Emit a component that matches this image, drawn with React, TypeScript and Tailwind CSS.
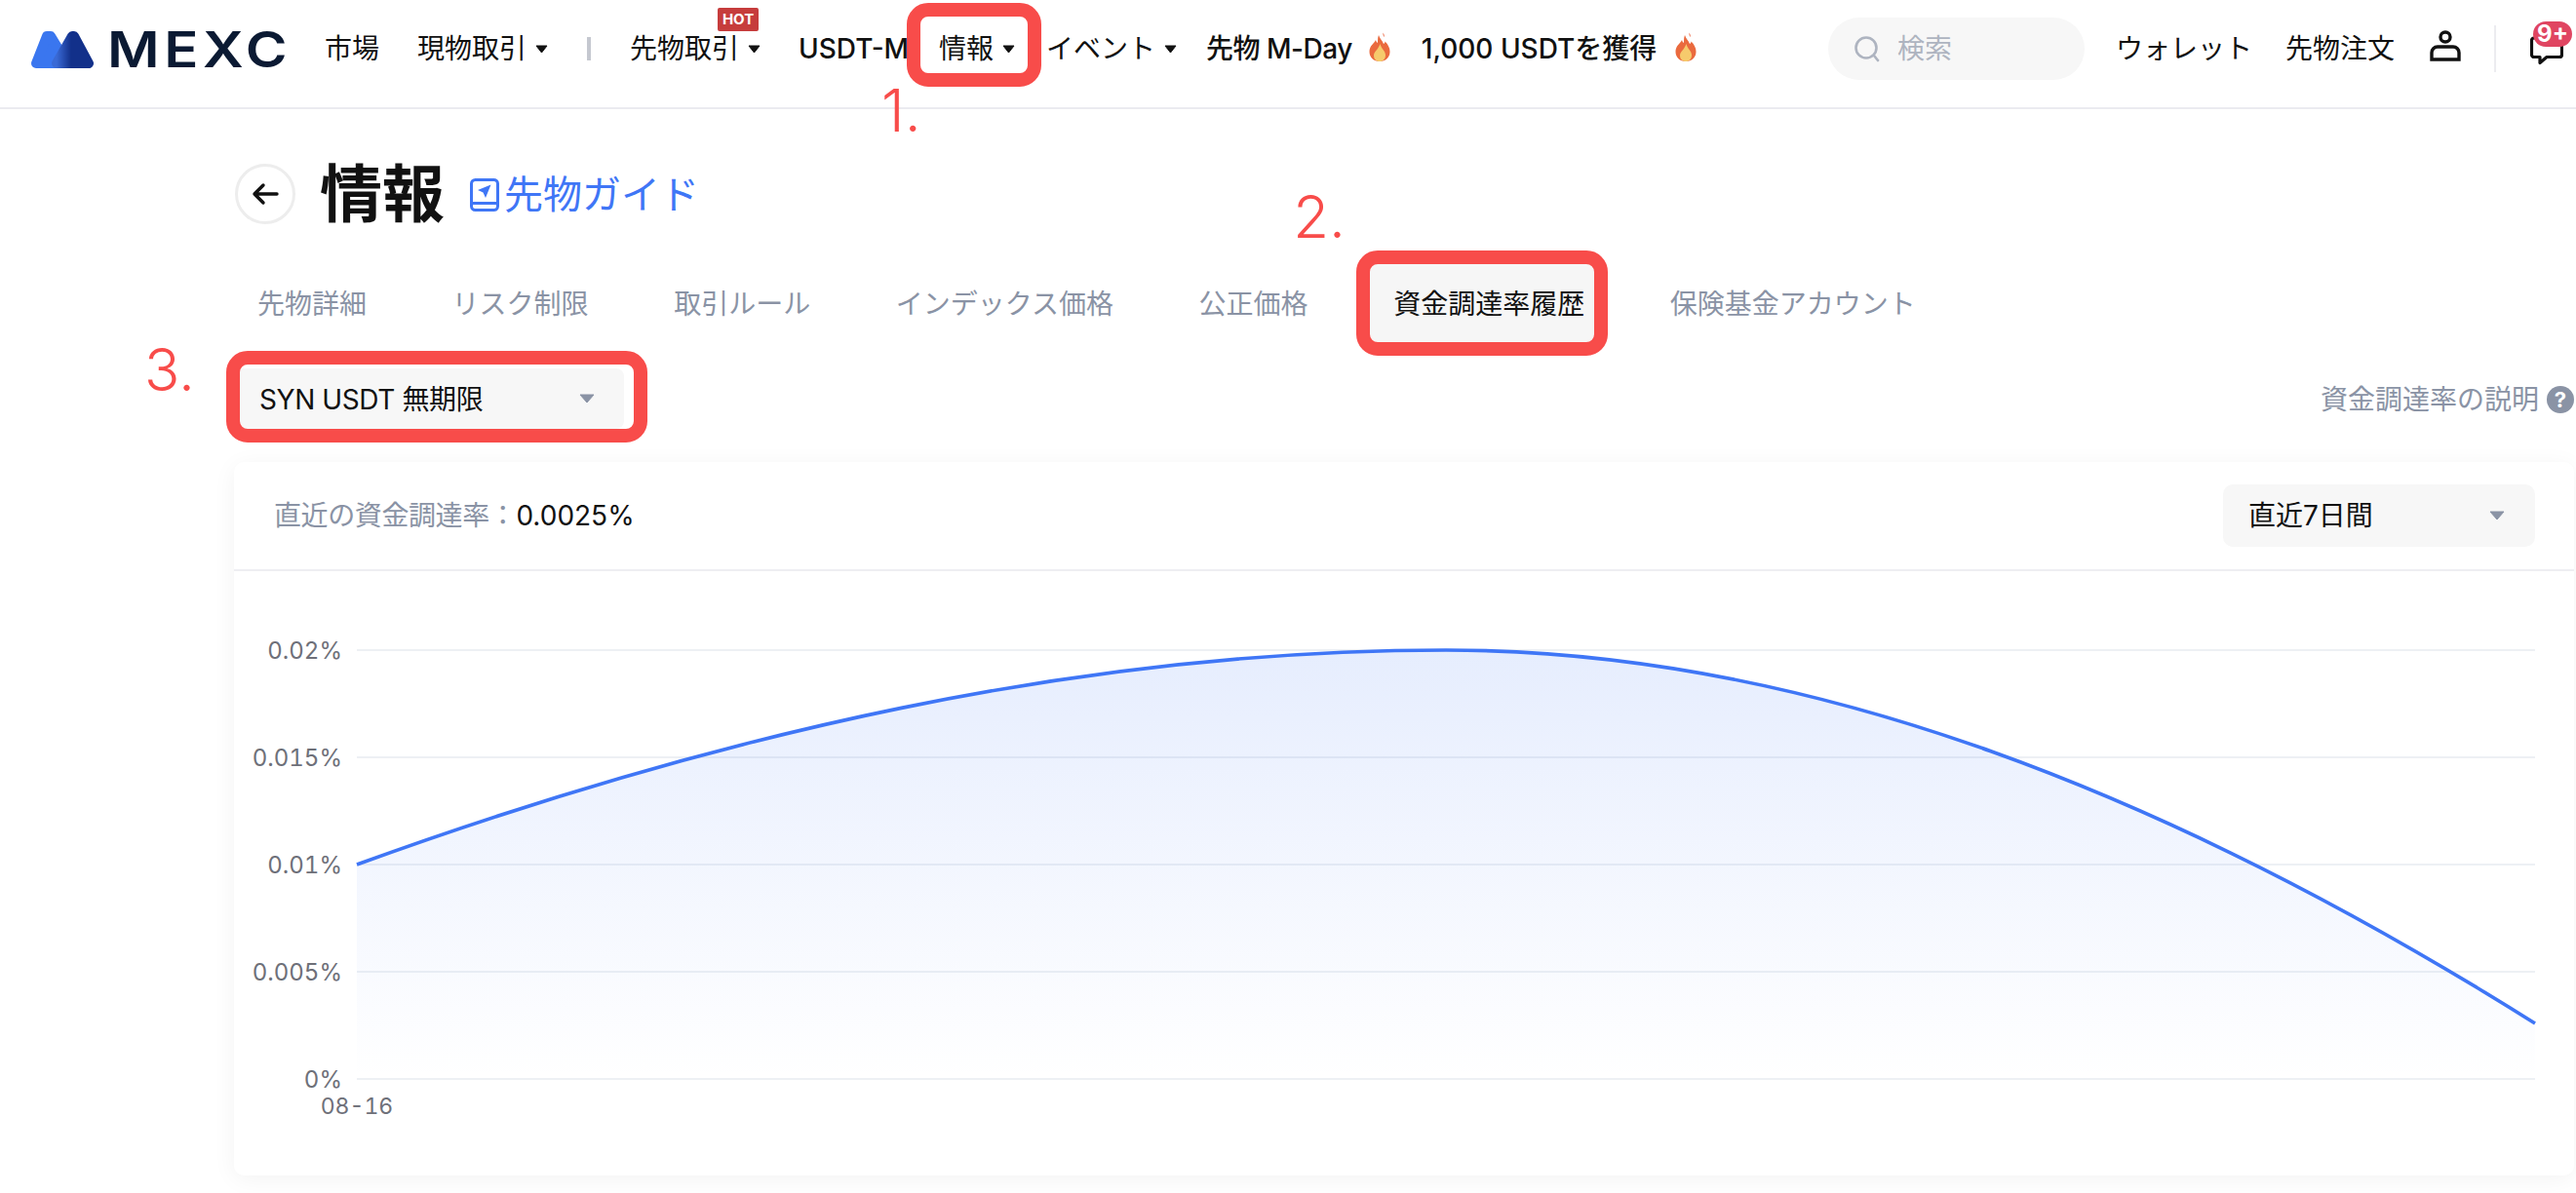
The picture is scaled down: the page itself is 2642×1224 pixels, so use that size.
import React from "react";

const FONT = "[font-family:Inter,'Noto_Sans_CJK_JP',sans-serif]";

function Caret({ gray }: { gray?: boolean }) {
  if (gray) {
    return (
      <svg width="16" height="10" viewBox="0 0 16 10" className="shrink-0">
        <path d="M1 1 H15 L8 9 Z" fill="#8a93a5" stroke="#8a93a5" strokeLinejoin="round" strokeWidth="1" />
      </svg>
    );
  }
  return (
    <svg width="13" height="9" viewBox="0 0 13 9" className="ml-[9px] shrink-0">
      <path d="M1 1 H12 L6.5 8 Z" fill="#111" stroke="#111" strokeLinejoin="round" strokeWidth="1" />
    </svg>
  );
}

function Flame() {
  return (
    <svg width="22" height="30" viewBox="0 0 22 30" className="shrink-0 block">
      <path d="M14.5 0.5 C15.5 2 16 3.5 15.5 5 C14.8 4 14.3 2.5 14.5 0.5 Z" fill="#e9603a" />
      <path d="M10 3 C11 7 14 8.5 15 12 C16 11.5 16.5 10.5 16.5 9.5 C19.5 12.5 21.5 16 21.5 20 C21.5 26 17 30 11 30 C5 30 0.5 26 0.5 20 C0.5 14 5 12 7 8 C7.5 9.5 8 10.5 9 11 C9 8 9 5.5 10 3 Z" fill="#ea6a3e" />
      <path d="M11.5 12 C12.5 17 17 19 17 23.5 C17 27.5 14.5 30 11 30 C7.5 30 5 27.5 5 24 C5 20 9.5 18 11.5 12 Z" fill="#f6ca6c" />
    </svg>
  );
}

function Logo() {
  return (
    <div className="flex items-center shrink-0">
      <svg width="64" height="39" viewBox="0 0 64 39" className="shrink-0">
        <defs>
          <linearGradient id="mx" x1="0" y1="0" x2="1" y2="0">
            <stop offset="0" stopColor="#3a6ad6" />
            <stop offset="0.45" stopColor="#12308a" />
            <stop offset="1" stopColor="#12308a" />
          </linearGradient>
        </defs>
        <path d="M5 34 L16 6 H20 L37 34 Z" fill="#3a76ef" stroke="#3a76ef" strokeWidth="10" strokeLinejoin="round" />
        <path d="M26 34 L42 6 H44 L59 34 Z" fill="url(#mx)" stroke="url(#mx)" strokeWidth="10" strokeLinejoin="round" />
      </svg>
      <span className="ml-[14px] w-[183px] inline-block origin-left scale-x-[1.14] text-[51px] leading-none font-semibold tracking-[4px] text-[#0b1a33] [font-family:Inter,sans-serif]">MEXC</span>
    </div>
  );
}

function Ring({ className }: { className: string }) {
  return <div className={`absolute border-[14px] border-[#f84c4a] rounded-[22px] ${className}`} />;
}

function Chart() {
  const grid = [667, 777, 887, 997, 1107];
  const labels = ["0.02%", "0.015%", "0.01%", "0.005%", "0%"];
  const line = "M366 887 C738 752 1111 667 1483 667 C1856 667 2228 816 2600 1050";
  return (
    <svg viewBox="240 586 2400 620" className="w-[2400px] h-[620px] block tabular-nums">
      <defs>
        <linearGradient id="area" x1="0" y1="667" x2="0" y2="1107" gradientUnits="userSpaceOnUse">
          <stop offset="0" stopColor="#3f76f6" stopOpacity="0.13" />
          <stop offset="1" stopColor="#3f76f6" stopOpacity="0" />
        </linearGradient>
      </defs>
      {grid.map((y, i) => (
        <g key={y}>
          <line x1="366" x2="2600" y1={y} y2={y} stroke="#edf0f4" strokeWidth="2" />
          <text x="351" y={y + 9} textAnchor="end" fontSize="24" fill="#6e7079" fontFamily="Inter, sans-serif">
            {labels[i]}
          </text>
        </g>
      ))}
      <path d={`${line} L2600 1107 L366 1107 Z`} fill="url(#area)" />
      <path d={line} fill="none" stroke="#3f76f6" strokeWidth="3.6" />
      <text x="366" y="1143" textAnchor="middle" fontSize="23" fill="#6e7079" fontFamily="Inter, sans-serif">08-16</text>
    </svg>
  );
}

export default function App() {
  const tabs = ["先物詳細", "リスク制限", "取引ルール", "インデックス価格", "公正価格", "資金調達率履歴", "保険基金アカウント"];
  return (
    <div className={`w-[2642px] h-[1224px] overflow-hidden bg-white text-[#111] relative ${FONT}`}>
      <header className="h-[112px] border-b-2 border-[#ebebf0] flex items-center pt-[10px] pb-[20px] pl-[32px] text-[28px] leading-[40px] whitespace-nowrap">
        <Logo />
        <span className="ml-[40px]">市場</span>
        <div className="ml-[39px] flex items-center"><span>現物取引</span><Caret /></div>
        <div className="ml-[40px] w-[4px] h-[24px] bg-[#c5c8d0]" />
        <div className="ml-[40px] flex items-center relative">
          <span>先物取引</span><Caret />
          <span className="absolute left-[90px] top-[-22px] w-[42px] h-[24px] bg-[#c63c3c] rounded-[2px] text-white text-[15px] leading-[24px] font-bold text-center">HOT</span>
        </div>
        <span className="ml-[39px] font-medium w-[109px]">USDT-M</span>
        <div className="ml-[35px] flex items-center relative">
          <Ring className="left-[-33px] right-[-27px] top-[-27px] bottom-[-19px]" />
          <span>情報</span><Caret />
          <span className="absolute left-[-59px] top-[48px] text-[60px] leading-[70px] font-light text-[#f84c4a]">1.</span>
        </div>
        <div className="ml-[32px] flex items-center"><span>イベント</span><Caret /></div>
        <span className="ml-[30px] font-medium tracking-[-0.5px]">先物 M-Day</span>
        <span className="ml-[17px] -mt-[4px]"><Flame /></span>
        <span className="ml-[32px] font-medium">1,000 USDTを獲得</span>
        <span className="ml-[19px] -mt-[4px]"><Flame /></span>
        <div className="ml-auto flex items-center">
          <div className="w-[263px] h-[64px] rounded-[32px] bg-[#f7f7f7] flex items-center pl-[26px] text-[#aeb4c0]">
            <svg width="28" height="28" viewBox="0 0 28 28" fill="none" stroke="#aeb4c0" strokeWidth="2.6" strokeLinecap="round">
              <circle cx="13" cy="13" r="10.5" />
              <path d="M21 21 L25 26" />
            </svg>
            <span className="ml-[17px]">検索</span>
          </div>
          <span className="ml-[32px]">ウォレット</span>
          <span className="ml-[34px]">先物注文</span>
          <svg width="32" height="32" viewBox="0 0 32 32" fill="none" stroke="#111" strokeWidth="3.4" className="ml-[36px] -mt-[7px]">
            <circle cx="16" cy="7" r="5" />
            <path d="M8 17 H24 A6 6 0 0 1 30 23 V30 H2 V23 A6 6 0 0 1 8 17 Z" />
          </svg>
          <div className="ml-[34px] w-[2px] h-[48px] bg-[#ececf0]" />
          <div className="ml-[35px] mr-[13px] relative w-[34px] h-[30px]">
            <svg width="34" height="30" viewBox="0 0 34 30" fill="none" stroke="#111" strokeWidth="3.2" strokeLinejoin="round" className="mt-[2px]">
              <path d="M4 2 H30 A2.5 2.5 0 0 1 32.5 4.5 V19 A2.5 2.5 0 0 1 30 21.5 H17 L10 27.5 V21.5 H4 A2.5 2.5 0 0 1 1.5 19 V4.5 A2.5 2.5 0 0 1 4 2 Z" />
            </svg>
            <span className="absolute left-[3px] top-[-13px] w-[40px] h-[26px] rounded-full bg-[#e04561] text-white text-[24px] leading-[26px] font-bold text-center">9+</span>
          </div>
        </div>
      </header>

      <main className="pl-[240px] pr-[2px]">
        <div className="flex items-center pt-[56px] h-[118px]">
          <button className="ml-[1px] w-[62px] h-[62px] rounded-full border-[3px] border-[#ededed] flex items-center justify-center">
            <svg width="28" height="24" viewBox="0 0 28 24" fill="none" stroke="#111" strokeWidth="3.4" strokeLinecap="round" strokeLinejoin="round">
              <path d="M26 12 H3 M12 3 L3 12 L12 21" />
            </svg>
          </button>
          <h1 className="ml-[25px] text-[64px] leading-[62px] font-bold text-[#111]">情報</h1>
          <svg width="30" height="34" viewBox="0 0 30 34" fill="none" className="ml-[26px] mt-[2px] shrink-0">
            <rect x="1.5" y="1.5" width="27" height="31" rx="4" stroke="#3f76f6" strokeWidth="3" />
            <path d="M2 25.5 H28" stroke="#3f76f6" strokeWidth="3" />
            <path d="M21.5 6.5 L8 12 L13.5 14.5 L16 20 Z" fill="#3f76f6" />
          </svg>
          <span className="ml-[5px] mt-[2px] text-[40px] leading-[48px] text-[#3f76f6]">先物ガイド</span>
        </div>

        <div className="mt-[41px] flex gap-[39.6px] text-[28px] leading-[40px] h-[80px] whitespace-nowrap">
          {tabs.map((t, i) => (
            <div key={t} className={`relative px-[24px] pt-[2px] flex items-center h-[80px] rounded-[8px] ${i === 5 ? "bg-[#f6f6f6] text-[#111]" : "text-[#8a93a5]"}`}>
              {t}
              {i === 5 && (
                <>
                  <Ring className="left-[-14px] right-[0px] top-[-14px] bottom-[-14px]" />
                  <span className="absolute left-[-79px] top-[-84px] text-[60px] leading-[70px] font-light text-[#f84c4a]">2.</span>
                </>
              )}
            </div>
          ))}
        </div>

        <div className="mt-[27px] flex items-center justify-between h-[62px]">
          <div className="relative w-[400px] h-[62px] rounded-[8px] bg-[#f7f7f7] flex items-center justify-between pl-[26px] pr-[30px] text-[28px] leading-[40px]">
            <span className="mt-[2px] tracking-[-0.4px]">SYN USDT 無期限</span>
            <Caret gray />
            <Ring className="left-[-8px] right-[-24px] top-[-18px] bottom-[-14px]" />
            <span className="absolute left-[-92px] top-[-34px] text-[60px] leading-[70px] font-light text-[#f84c4a]">3.</span>
          </div>
          <div className="flex items-center text-[28px] leading-[40px] text-[#8a93a5]">
            <span className="mt-[2px]">資金調達率の説明</span>
            <span className="ml-[8px] mt-[2px] w-[28px] h-[28px] rounded-full bg-[#8a93a5] text-white text-[22px] leading-[28px] font-bold text-center">?</span>
          </div>
        </div>

        <section className="mt-[34px] w-[2400px] h-[732px] rounded-[10px] bg-white shadow-[0_4px_24px_rgba(0,0,0,0.05)]">
          <div className="h-[112px] border-b-2 border-[#eeeef2] flex items-center justify-between pl-[41px] pr-[40px] text-[28px] leading-[40px]">
            <div>
              <span className="text-[#8a93a5] tracking-[-0.4px]">直近の資金調達率：</span>
              <span className="text-[#111]">0.0025%</span>
            </div>
            <div className="w-[320px] h-[64px] rounded-[10px] bg-[#f7f7f7] flex items-center justify-between pl-[26px] pr-[31px]">
              <span>直近7日間</span>
              <Caret gray />
            </div>
          </div>
          <Chart />
        </section>
      </main>
    </div>
  );
}
